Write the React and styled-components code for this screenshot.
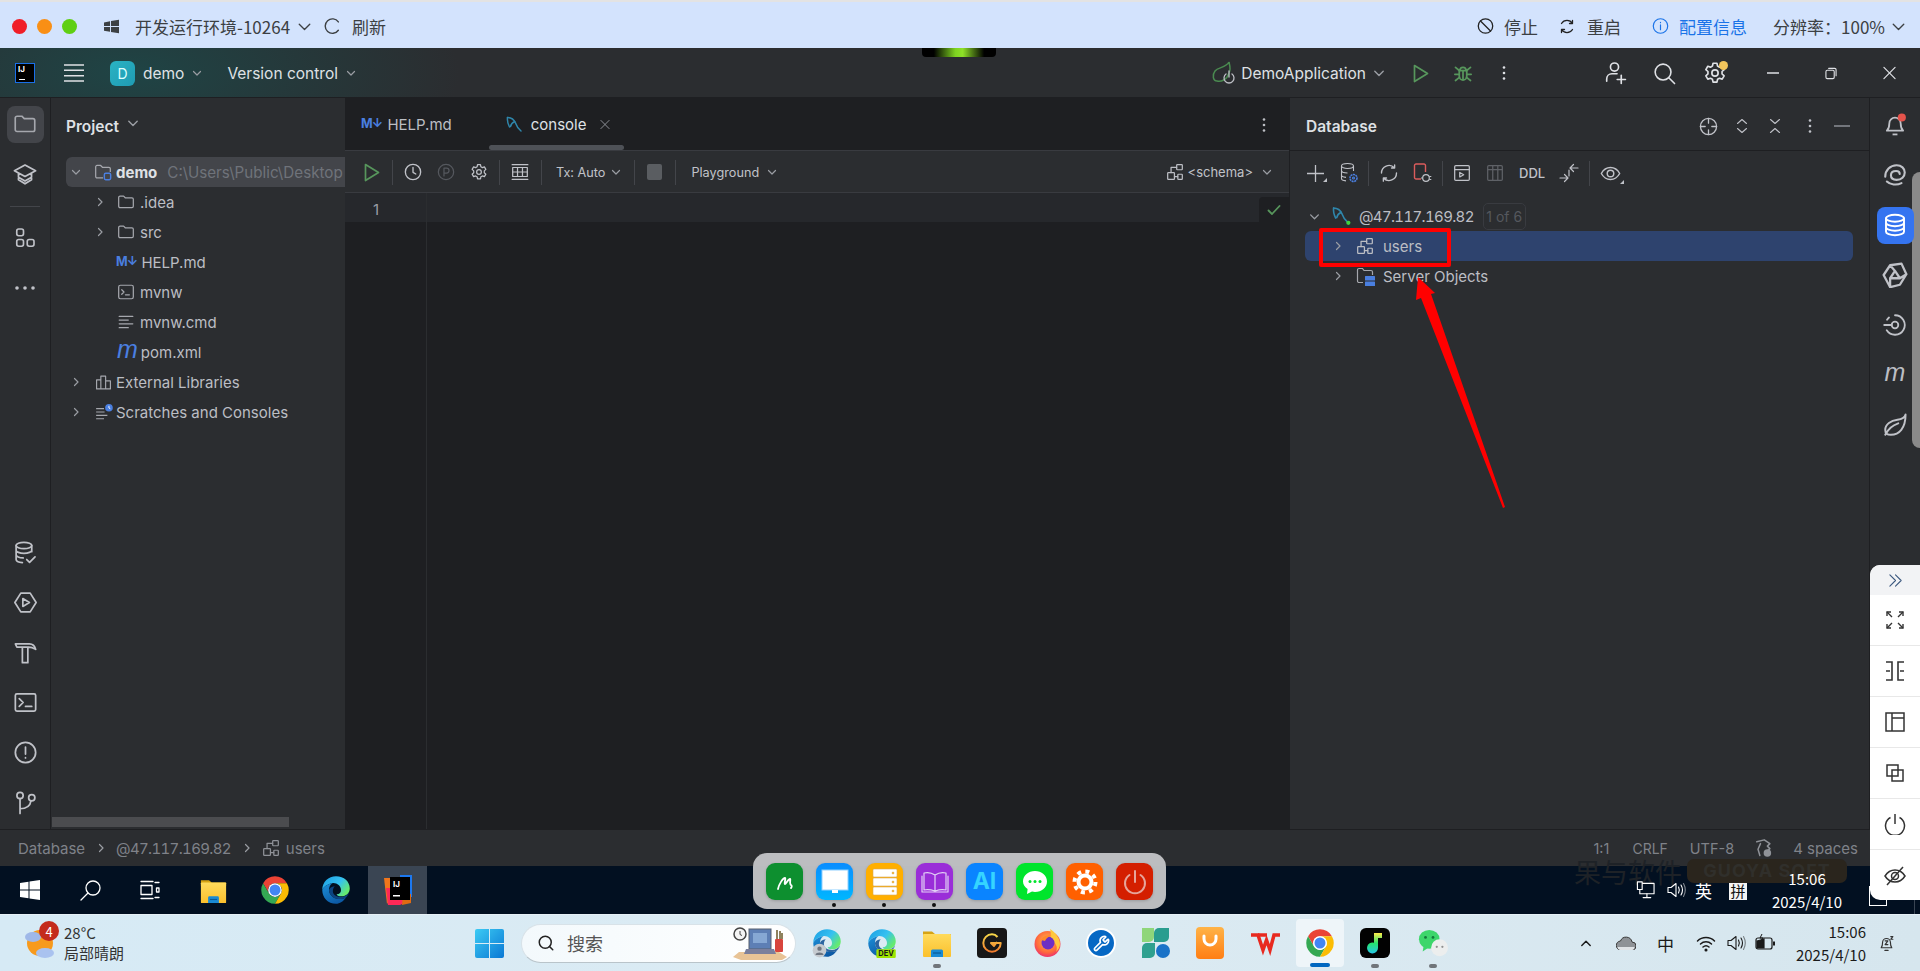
import React from 'react';
import styled, { createGlobalStyle } from 'styled-components';
import { Search, Wrench } from 'lucide-react';

const ui = `Inter, "Noto Sans", sans-serif`;
const cjk = `"Noto Sans CJK SC", "Noto Sans", sans-serif`;

const GlobalStyle = createGlobalStyle`
  html, body { margin: 0; padding: 0; background: #1e1f22; }
  * { box-sizing: border-box; }
`;

const Page = styled.div`
  position: relative;
  width: 1920px;
  height: 971px;
  overflow: hidden;
  display: flex;
  flex-direction: column;
  font-family: ${ui};
  -webkit-font-smoothing: antialiased;
`;

const Slot = styled.span`
  position: relative;
  display: inline-flex;
  align-items: center;
  justify-content: center;
  flex: none;
  width: ${p => p.$w}px;
  margin-left: ${p => p.$ml || 0}px;
  color: ${p => p.$c || 'inherit'};
`;

const Txt = styled.span`
  flex: none;
  white-space: nowrap;
  margin-left: ${p => p.$ml || 0}px;
  font-size: ${p => p.$fs || 15}px;
  font-weight: ${p => p.$fw || 400};
  color: ${p => p.$c || 'inherit'};
`;

const HostTxt = styled(Txt)`
  font-variant-numeric: tabular-nums;
  letter-spacing: -0.65px;
`;

const Push = styled.div`
  margin-left: auto;
`;

/* browser chrome */
const TopBar = styled.header`
  flex: none;
  height: 48px;
  display: flex;
  align-items: center;
  padding: 2px 14px 0 12px;
  background: #d3e3fd;
  border-top: 2px solid #e3e3e3;
  font-family: ${cjk};
  color: #3c4043;
`;

const Light = styled.span`
  flex: none;
  width: 15px;
  height: 15px;
  margin-right: 10px;
  border-radius: 50%;
  background: ${p => p.$c};
`;

const Notch = styled.div`
  position: absolute;
  left: 922px;
  top: 48px;
  width: 74px;
  height: 9px;
  border-radius: 0 0 4px 4px;
  background: linear-gradient(90deg, #000 16%, #7ed321 45%, #8ee028 55%, #000 84%);
`;

/* ide title bar */
const IdeHeader = styled.div`
  flex: none;
  height: 50px;
  display: flex;
  align-items: center;
  padding: 1px 24px 0 15px;
  color: #dfe1e5;
  background: radial-gradient(ellipse 330px 130px at 130px 50%, #1f4445 0%, rgba(31, 68, 69, 0) 100%), #2b2d30;
  border-bottom: 1px solid #1e1f22;
`;

const IjLogo = styled.span`
  flex: none;
  width: 20px;
  height: 20px;
  border: 1.5px solid #1a6fe8;
  background: #000;
  color: #fff;
  font: 700 8px/9px ${ui};
  padding-left: 2px;
  padding-top: 1px;
  position: relative;
  &::after {
    content: '';
    position: absolute;
    left: 3px;
    bottom: 2px;
    width: 6px;
    height: 1.5px;
    background: #fff;
  }
`;

const ProjectBadge = styled.span`
  flex: none;
  width: 25px;
  height: 25px;
  margin-left: 26px;
  border-radius: 6px;
  background: linear-gradient(135deg, #2ab3c4, #1f9bb2);
  color: #dff;
  font-size: 14px;
  display: flex;
  align-items: center;
  justify-content: center;
`;

const NotifDot = styled.span`
  position: absolute;
  right: -1px;
  top: 0;
  width: 9px;
  height: 9px;
  border-radius: 50%;
  background: #f2c55c;
`;

/* panels */
const Main = styled.div`
  flex: none;
  height: 731px;
  display: flex;
  background: #2b2d30;
`;

const LeftStripe = styled.aside`
  flex: none;
  width: 51px;
  display: flex;
  flex-direction: column;
  justify-content: space-between;
  align-items: center;
  padding: 1px 0 2px;
  border-right: 1px solid #1e1f22;
  color: #c0c2c8;
`;

const RightStripe = styled.aside`
  position: relative;
  flex: none;
  width: 51px;
  padding-top: 2px;
  border-left: 1px solid #1e1f22;
  color: #c0c2c8;
`;

const OuterScroll = styled.div`
  position: absolute;
  right: 0;
  top: 74px;
  width: 8px;
  height: 276px;
  border-radius: 8px 0 0 8px;
  background: #8a8a8a;
`;

const StripeGroup = styled.div`
  display: flex;
  flex-direction: column;
  align-items: center;
`;

const StripeSlot = styled.div`
  position: relative;
  width: 100%;
  min-width: 50px;
  height: 50px;
  display: flex;
  align-items: center;
  justify-content: center;
`;

const StripeTile = styled.div`
  width: 37px;
  height: 37px;
  display: flex;
  align-items: center;
  justify-content: center;
  border-radius: 8px;
  background: ${p => (p.$blue ? '#3574f0' : '#43454a')};
  color: ${p => (p.$blue ? '#fff' : '#c9cbd1')};
  z-index: 1;
`;

const StripeSep = styled.div`
  width: 30px;
  height: 14px;
  display: flex;
  align-items: center;
  &::after {
    content: '';
    width: 100%;
    height: 1px;
    background: #43454a;
  }
`;

const ProjectPanel = styled.section`
  position: relative;
  flex: none;
  width: 294px;
  overflow: hidden;
  color: #bcbec4;
`;

const PanelTitle = styled.div`
  height: 59px;
  display: flex;
  align-items: flex-start;
  padding: 19px 0 0 15px;
  line-height: 20px;
`;

const TreeRow = styled.div`
  height: 30px;
  display: flex;
  align-items: center;
  padding-left: ${p => p.$pl || 0}px;
  white-space: nowrap;
  overflow: hidden;
  background: ${p => p.$bg || 'transparent'};
  border-radius: ${p => p.$radius || '6px'};
`;

const ProjectTree = styled.div`
  margin-left: 15px;
`;

const HScroll = styled.div`
  position: absolute;
  left: 1px;
  bottom: 2px;
  width: 237px;
  height: 10px;
  background: #4b4c4f;
`;

const MdMark = styled.span`
  flex: none;
  margin-left: ${p => p.$ml || 0}px;
  font: 700 12.5px/1 ${ui};
  color: #4a7fe0;
  letter-spacing: -0.8px;
`;

const MavenMark = styled.span`
  flex: none;
  margin-left: ${p => p.$ml || 0}px;
  font: italic 500 25px/1 "Liberation Sans", sans-serif;
  color: ${p => p.$c || '#4a7fe0'};
  position: relative;
  top: -3px;
`;

const EditorCol = styled.section`
  flex: 1;
  min-width: 0;
  display: flex;
  flex-direction: column;
  background: #1e1f22;
  color: #bcbec4;
`;

const TabBar = styled.div`
  position: relative;
  flex: none;
  height: 52px;
  display: flex;
  align-items: center;
  padding: 1px 0 0 16px;
`;

const TabLine = styled.div`
  position: absolute;
  left: 144px;
  bottom: 0;
  width: 135px;
  height: 5px;
  border-radius: 3px;
  background: #4e5157;
`;

const EditorTools = styled.div`
  flex: none;
  height: 43px;
  display: flex;
  align-items: center;
  padding: 1px 0 0 19px;
  background: #2b2d30;
  border-top: 1px solid #393b40;
  border-bottom: 1px solid #393b40;
  color: #c0c2c8;
`;

const ToolSep = styled.span`
  flex: none;
  width: 1px;
  height: 25px;
  margin-left: ${p => p.$ml || 0}px;
  background: #43454a;
`;

const StopBox = styled.span`
  flex: none;
  width: 15px;
  height: 16px;
  margin-left: 12px;
  border-radius: 2px;
  background: #5a5d61;
`;

const EditorBody = styled.div`
  flex: 1;
  display: flex;
`;

const Gutter = styled.div`
  flex: none;
  width: 82px;
  border-right: 1px solid #2b2d30;
`;

const CaretRow = styled.div`
  height: 29px;
  display: flex;
  align-items: center;
  background: #26282c;
`;

const LineNo = styled(CaretRow)`
  padding: 3px 0 0 28px;
  font-size: 15px;
  color: #9a9da5;
`;

const CodeArea = styled.div`
  flex: 1;
`;

const CodeCaret = styled(CaretRow)`
  justify-content: flex-end;
  align-items: flex-end;
`;

const InspectBox = styled.div`
  width: 30px;
  height: 25px;
  display: flex;
  align-items: center;
  justify-content: center;
  border-radius: 4px 0 0 0;
  background: #1e1f22;
  color: #57965c;
`;

const DbPanel = styled.section`
  flex: none;
  width: 580px;
  border-left: 1px solid #1e1f22;
  color: #bcbec4;
`;

const DbHead = styled.div`
  height: 53px;
  display: flex;
  align-items: center;
  padding: 4px 19px 0 16px;
  border-bottom: 1px solid #1e1f22;
`;

const DbTools = styled.div`
  height: 50px;
  display: flex;
  align-items: center;
  padding: 0 0 6px 17px;
  color: #c0c2c8;
`;

const DbTree = styled.div`
  margin: 0 16px 0 15px;
`;

const CountBadge = styled.span`
  flex: none;
  width: 43px;
  height: 27px;
  margin-left: 9px;
  display: flex;
  align-items: center;
  justify-content: center;
  border: 1px solid #393b40;
  border-radius: 5px;
  font-size: 14px;
  color: #55585e;
`;

/* bottom bars */
const StatusBar = styled.footer`
  flex: none;
  height: 37px;
  display: flex;
  align-items: center;
  padding: 0 62px 0 18px;
  background: #2b2d30;
  border-top: 1px solid #1e1f22;
  color: #7f8289;
`;

const DarkTaskbar = styled.div`
  position: relative;
  flex: none;
  height: 48px;
  display: flex;
  align-items: center;
  background: #021021;
  color: #fff;
  font-family: ${cjk};
`;

const ActiveApp = styled.div`
  flex: none;
  width: 59px;
  height: 100%;
  margin-left: 17px;
  display: flex;
  align-items: center;
  justify-content: center;
  background: #3a4553;
`;

const Watermark = styled.div`
  position: absolute;
  left: 1574px;
  top: -7px;
  height: 24px;
  display: flex;
  align-items: center;
  gap: 5px;
  font-size: 27px;
  color: #1e2227;
  font-family: ${cjk};
`;

const WatermarkPill = styled.span`
  width: 160px;
  height: 24px;
  border-radius: 7px;
  background: #2a251d;
  color: #302f2b;
  font: 700 18px/24px ${ui};
  text-align: center;
  letter-spacing: 1px;
`;

const ClockOver = styled.div`
  position: relative;
  flex: none;
  margin-left: 23px;
`;

const PinyinBox = styled.span`
  flex: none;
  width: 18px;
  height: 19px;
  margin-left: 17px;
  display: flex;
  align-items: center;
  justify-content: center;
  background: #f4f4f4;
  color: #111;
  font-size: 15px;
`;

const ClockCol = styled.div`
  flex: none;
  display: flex;
  flex-direction: column;
  align-items: ${p => p.$align || 'center'};
  margin-left: ${p => p.$ml || 0}px;
  width: ${p => p.$w}px;
  line-height: 23px;
  font-size: 15px;
  color: ${p => p.$c || 'inherit'};
`;

const ChatStub = styled.span`
  flex: none;
  width: 18px;
  height: 20px;
  margin: 12px 0 0 25px;
  border: 1.5px solid #fff;
`;

const TrayEdge = styled.span`
  flex: none;
  width: 1px;
  height: 100%;
  margin-left: 27px;
  background: #3a4553;
`;

const LightTaskbar = styled.div`
  flex: none;
  height: 57px;
  display: flex;
  align-items: center;
  padding-left: 25px;
  background: linear-gradient(90deg, #d6eaf5, #dcebf3 50%, #d6e6ee);
  border-top: 1px solid #e6f0f6;
  font-family: ${cjk};
  color: #1a1a1a;
`;

const Notify = styled.span`
  position: absolute;
  left: 14px;
  top: -6px;
  width: 20px;
  height: 20px;
  border-radius: 50%;
  background: #c42b1c;
  color: #fff;
  font-size: 13px;
  display: flex;
  align-items: center;
  justify-content: center;
`;

const Weather = styled.div`
  flex: none;
  margin-left: 9px;
  font-size: 15px;
  line-height: 20px;
  color: #333;
`;

const SearchPill = styled.div`
  flex: none;
  width: 275px;
  height: 39px;
  margin-left: 17px;
  padding: 0 6px 0 15px;
  display: flex;
  align-items: center;
  border-radius: 20px;
  border: 1px solid #d8e2e8;
  border-bottom-color: #b9c4ca;
  background: linear-gradient(90deg, #f3f9fc, #ffffff);
  color: #555;
`;

const PinBox = styled.div`
  position: relative;
  flex: none;
  width: ${p => p.$w || 30}px;
  height: ${p => p.$h || 30}px;
  margin-left: ${p => p.$ml || 0}px;
  display: flex;
  align-items: center;
  justify-content: center;
  border-radius: 4px;
  background: ${p => p.$bg || 'transparent'};
`;

const PinMark = styled.span`
  position: absolute;
  left: 50%;
  bottom: ${p => p.$bottom}px;
  width: ${p => p.$w}px;
  height: 4px;
  border-radius: 2px;
  transform: translateX(-50%);
  background: ${p => p.$c};
`;

const ToolDisc = styled.span`
  width: 30px;
  height: 30px;
  display: flex;
  align-items: center;
  justify-content: center;
  border: 2px solid #fff;
  border-radius: 50%;
  background: #0668c4;
  color: #fff;
`;

/* overlays */
const Dock = styled.div`
  position: absolute;
  left: 753px;
  top: 853px;
  width: 413px;
  height: 56px;
  padding: 10px 0 0 13px;
  display: flex;
  gap: 13px;
  border-radius: 14px;
  background: rgba(198, 199, 201, 0.94);
`;

const DockItem = styled.div`
  position: relative;
  width: 37px;
  height: 37px;
  border-radius: 9px;
  background: ${p => p.$bg};
  color: #fff;
  display: flex;
  align-items: center;
  justify-content: center;
  box-shadow: 0 1px 3px rgba(0, 0, 0, 0.18);
  ${p => p.$open && `
    &::after {
      content: '';
      position: absolute;
      left: 16px;
      bottom: -7px;
      width: 4px;
      height: 4px;
      border-radius: 50%;
      background: #111;
    }
  `}
`;

const AiMark = styled.span`
  font: 700 23px/1 ${ui};
  color: #35d4ff;
`;

const FloatPanel = styled.aside`
  position: absolute;
  right: 0;
  top: 565px;
  width: 50px;
  height: 335px;
  background: #fff;
  border-radius: 10px 0 0 10px;
  overflow: hidden;
  color: #333;
`;

const FloatHead = styled.div`
  height: 30px;
  display: flex;
  align-items: center;
  justify-content: center;
  background: #f2f3f5;
  color: #3d5a80;
`;

const FloatRow = styled.div`
  height: 51px;
  display: flex;
  align-items: center;
  justify-content: center;
  border-bottom: 1px solid #e8e8e8;
  &:last-child { border-bottom: 0; }
`;

const RedBox = styled.div`
  position: absolute;
  left: 1319px;
  top: 228px;
  width: 132px;
  height: 39px;
  border: 4px solid #ff0000;
  border-radius: 2px;
`;

const ArrowSvg = styled.svg`
  position: absolute;
  left: 1400px;
  top: 270px;
`;

const Tri = styled.i`
  position: absolute;
  right: -3px;
  bottom: 0;
  width: 0;
  height: 0;
  border-left: 4px solid transparent;
  border-bottom: 4px solid #c0c2c8;
`;

/* icons */
const I = ({ s = 16, vb = 16, sw = 1.1, c = 'currentColor', children }) => (
  <svg width={s} height={s} viewBox={`0 0 ${vb} ${vb}`} fill="none" stroke={c} strokeWidth={sw} strokeLinecap="round" strokeLinejoin="round">
    {children}
  </svg>
);

const Chev = ({ dir = 'down', s = 10, c = '#9a9da3', sw = 1.2 }) => {
  const d = { down: 'M1.5 3.5 5 7l3.5-3.5', right: 'M3.5 1.5 7 5 3.5 8.5', up: 'M1.5 7 5 3.5 8.5 7' }[dir];
  return <I s={s} vb={10} sw={sw} c={c}><path d={d} /></I>;
};

const FolderIco = ({ s = 18 }) => (
  <I s={s} c="#a5a7ad"><path d="M1.5 4a1.2 1.2 0 0 1 1.2-1.2h3.2L7.5 4.4h5.8a1.2 1.2 0 0 1 1.2 1.2v6.2a1.2 1.2 0 0 1-1.2 1.2H2.7a1.2 1.2 0 0 1-1.2-1.2z" /></I>
);

const ModuleFolder = () => (
  <svg width="18" height="18" viewBox="0 0 16 16" fill="none" strokeLinejoin="round">
    <path d="M8 13.2H2.7a1.2 1.2 0 0 1-1.2-1.2V3.4a1.2 1.2 0 0 1 1.2-1.2h3.2l1.6 1.6h5.8a1.2 1.2 0 0 1 1.2 1.2V8" stroke="#a5a7ad" strokeWidth="1.1" />
    <rect x="9.2" y="9.2" width="5.6" height="5.6" rx="1.2" stroke="#4a7fe0" strokeWidth="1.3" />
  </svg>
);

const TerminalFile = () => (
  <I s={18} c="#a5a7ad"><rect x="1.5" y="2" width="13" height="12" rx="1.5" /><path d="M4.2 6 6.2 8 4.2 10M7.5 10.5h3.5" /></I>
);

const TextFile = () => (
  <I s={18} c="#a5a7ad" sw={1.2}><path d="M2 3h12M2 6.3h8M2 9.6h12M2 13h8" /></I>
);

const LibIco = () => (
  <I s={17} c="#a5a7ad"><path d="M1.5 5.5h4v8.5h-4zM5.5 2h4.5v12H5.5zM10 6.5h4.5V14H10z" /></I>
);

const ScratchIco = () => (
  <svg width="18" height="18" viewBox="0 0 16 16" fill="none">
    <path d="M1 5h7M1 8h7.5M1 11h10M1 14h7" stroke="#a5a7ad" strokeWidth="1.1" />
    <circle cx="12.4" cy="4.2" r="3.4" fill="#4a7fe0" />
    <path d="M12.4 2.5v1.9l1.2.7" stroke="#fff" strokeWidth=".8" />
  </svg>
);

const SchemaIco = ({ s = 18, c = '#bcbec4' }) => (
  <I s={s} c={c}><rect x="9.5" y="1.5" width="5" height="4.5" rx=".6" /><rect x="1.5" y="8.5" width="6" height="6" rx=".6" /><rect x="10.5" y="10" width="4" height="4.5" rx=".6" /><path d="M9.5 3.8H4.5v4.7M7.5 12.2h3" /></I>
);

const Dolphin = ({ s = 18, dot }) => (
  <svg width={s} height={s} viewBox="0 0 18 18" fill="none" stroke="#2f86ab" strokeWidth="1.5" strokeLinecap="round">
    <path d="M1.5 1.5C6 1.5 8 3.5 9.5 7c1 3 2.5 5.5 5.5 8" />
    <path d="M1.5 1.5C1 5 2 8 3.5 11" />
    <path d="M8.8 5.5C6.5 6.5 5 8 4.5 10.5" />
    {dot && <circle cx="15.5" cy="15.5" r="2" fill="#3fd43f" stroke="none" />}
  </svg>
);

const Play = ({ c = '#57965c' }) => (
  <svg width="16" height="19" viewBox="0 0 16 19" fill="none" stroke={c} strokeWidth="1.7" strokeLinejoin="round"><path d="M1.5 1.5 14.5 9.5 1.5 17.5z" /></svg>
);

const Bug = () => (
  <I s={20} c="#57965c" sw={1.4}>
    <path d="M5 6h6v4.5a3 3 0 0 1-6 0z" /><path d="M5.6 5.8a2.4 2.4 0 0 1 4.8 0M8 6v7.5M2 3.5l3 2.5M14 3.5 11 6M1.5 9H5M14.5 9H11M2 14l3.2-2.5M14 14l-3.2-2.5" />
  </I>
);

const Dots = ({ s = 16, c = 'currentColor' }) => (
  <svg width={s} height={s} viewBox="0 0 16 16" fill={c}><circle cx="8" cy="2.5" r="1.3" /><circle cx="8" cy="8" r="1.3" /><circle cx="8" cy="13.5" r="1.3" /></svg>
);

const Gear = ({ s = 18, c = 'currentColor', sw = 1.1 }) => (
  <I s={s} c={c} sw={sw}>
    <path d="M6.7 1.5h2.6l.4 1.9 1.3.7 1.8-.6 1.3 2.2-1.4 1.3v1.6l1.4 1.3-1.3 2.2-1.8-.6-1.3.7-.4 1.9H6.7l-.4-1.9-1.3-.7-1.8.6-1.3-2.2 1.4-1.3V7L1.9 5.7l1.3-2.2 1.8.6 1.3-.7z" />
    <circle cx="8" cy="8" r="2.1" />
  </I>
);

const Cap = () => (
  <I s={26}><path d="M8 2.5 14.5 6 8 9.5 1.5 6zM4 7.5v4L8 14l4-2.5v-4M4 10l4 2.3 4-2.3" /></I>
);

const Structure = () => (
  <I s={24}><rect x="2.5" y="2" width="4.5" height="4.5" rx="1.3" /><rect x="2.5" y="9" width="4.5" height="4.5" rx="1.3" /><rect x="9.5" y="9" width="4.5" height="4.5" rx="1.3" /></I>
);

const DbCheck = () => (
  <I s={25}><ellipse cx="7" cy="3.5" rx="5" ry="2" /><path d="M2 3.5v9c0 1 1.5 1.8 4 2M12 3.5v4M2 6.5c0 1.1 2.2 2 5 2s5-.9 5-2M2 9.5c0 1.1 2 2 4.5 2" /><path d="m8.8 12.5 1.8 1.8 3.5-3.5" /></I>
);

const Services = () => (
  <I s={25}><path d="M5 2h6l3.8 6-3.800 6H5L1.200 8z" /><path d="M6.300 5.500 10.500 8l-4.200 2.500z" /></I>
);

const Hammer = () => (
  <I s={25}><path d="M1.500 2.500h9c2 0 3.500 1.500 4 3.500-1.500-1-3-1.500-4.500-1.500H2.500zM6 4.500v10h3.500v-10" /></I>
);

const Terminal = ({ s = 25 }) => (
  <I s={s}><rect x="1.500" y="2.500" width="13" height="11" rx="1" /><path d="M4 5.500 6.500 8 4 10.500M8 10.500h4" /></I>
);

const Warn = () => (
  <I s={25}><circle cx="8" cy="8" r="6.500" /><path d="M8 4.500V9M8 11.300v.2" /></I>
);

const GitIco = () => (
  <I s={25}><circle cx="4.500" cy="3.500" r="2" /><circle cx="12" cy="5" r="2" /><path d="M4.500 5.500V15M4.500 12c3.500 0 6.500-1.500 7-5" /></I>
);

const Bell = () => (
  <svg width="26" height="26" viewBox="0 0 16 16" fill="none" stroke="currentColor" strokeWidth="1.1" strokeLinejoin="round">
    <path d="M3 11.500c1-1 1.500-2 1.500-4.500a3.500 3.500 0 0 1 7 0c0 2.500.5 3.500 1.500 4.500z" />
    <path d="M6.500 13.800h3" />
    <circle cx="12.200" cy="3.400" r="2.500" fill="#e5534b" stroke="none" />
  </svg>
);

const Swirl = () => (
  <I s={26} sw={1.3}><path d="M2 9c0-4 3-7 7-7 3 0 5 2 5 4.500S12 11 9 11c-2 0-3.500-1-3.500-2.800S7 5.500 8.700 5.500c1.300 0 2.200.7 2.200 1.900M3 12c2 2 6 2.500 9 1" /></I>
);

const DbStack = ({ s = 24, c = 'currentColor' }) => (
  <I s={s} c={c} sw={1.3}><ellipse cx="8" cy="3.500" rx="6" ry="2.300" /><path d="M2 3.500v9c0 1.300 2.700 2.300 6 2.300s6-1 6-2.300v-9M2 6.500c0 1.300 2.700 2.300 6 2.300s6-1 6-2.300M2 9.500c0 1.300 2.700 2.300 6 2.300s6-1 6-2.300" /></I>
);

const ClusterIco = () => (
  <I s={26} sw={1.4}><path d="M5 2l7-1 3 6.500-4 6.500-6 1.500L1 8zM8 5.500l3 4.500H5zM5 2l3 3.500M15 7.500 11 10M5 15.500 5 10" /></I>
);

const TargetIco = () => (
  <I s={24} sw={1.2}><path d="M8 1.500A6.500 6.500 0 1 1 2.500 11.500M2.700 4.500A6.500 6.500 0 0 1 4 3" /><circle cx="8" cy="8" r="2.200" /><path d="M.8 8h5" /></I>
);

const LeafIco = () => (
  <I s={26} sw={1.2}><path d="M14.500 1.500c-.5 2-2.500 3-5 3.300C5.500 5.300 2 7.500 2 11c0 2 1.500 3 3.500 3 5 0 9-4 9-12.500zM2 14c2-4 5-6 8-7" /></I>
);

const Crosshair = () => (
  <I s={19}><circle cx="8" cy="8" r="6.800" /><path d="M8 1.200v4M8 10.800v4M1.200 8h4M10.800 8h4" /></I>
);

const ExpandAll = () => <I s={16}><path d="m3.500 5.500 4.500-4 4.500 4M3.500 10.500l4.500 4 4.500-4" /></I>;
const CollapseAll = () => <I s={16}><path d="m3.500 1.500 4.500 4 4.500-4M3.500 14.500l4.500-4 4.500 4" /></I>;

const Win10 = ({ s = 20 }) => (
  <svg width={s} height={s} viewBox="0 0 20 20" fill="#fff"><path d="M0 3 8.500 1.800v7.700H0zM9.500 1.600 20 0v9.500H9.500zM0 10.500h8.500v7.700L0 17zM9.500 10.500H20V20L9.500 18.400z" /></svg>
);

const WinGrid = () => (
  <svg width="15" height="15" viewBox="0 0 20 20" fill="#3c4043"><path d="M0 4.500 8 3v6.300H0zM9.300 2.800 20 1v8.300H9.300zM0 10.700h8v6.300l-8-1.500zM9.300 10.700H20V19L9.300 17.200z" /></svg>
);

const Win11 = () => (
  <svg width="29" height="29" viewBox="0 0 29 29">
    <defs>
      <linearGradient id="w11" x1="0" y1="0" x2="1" y2="1"><stop offset="0" stopColor="#3ccbf4" /><stop offset="1" stopColor="#0a78d4" /></linearGradient>
    </defs>
    <rect width="29" height="29" rx="2" fill="url(#w11)" />
    <path d="M14.500 0v29M0 14.500h29" stroke="#d9ecf5" strokeWidth="1" />
  </svg>
);

const Chrome = ({ s = 30 }) => (
  <svg width={s} height={s} viewBox="0 0 48 48">
    <path d="M4.950 13A22 22 0 0 1 43.050 13H24A11 11 0 0 0 14.470 29.500Z" fill="#ea4335" />
    <path d="M4.950 13 14.470 29.500A11 11 0 0 0 33.530 29.500L24 46A22 22 0 0 1 4.950 13Z" fill="#34a853" />
    <path d="M43.050 13H24A11 11 0 0 1 33.530 29.500L24 46A22 22 0 0 0 43.050 13Z" fill="#fbbc04" />
    <circle cx="24" cy="24" r="11" fill="#fff" />
    <circle cx="24" cy="24" r="8.800" fill="#4285f4" />
  </svg>
);

const Edge = ({ s = 30, id, dev, profile }) => (
  <svg width={s} height={s} viewBox="0 0 48 48">
    <defs>
      <linearGradient id={`${id}a`} x1="0" y1="0" x2="1" y2=".6"><stop offset="0" stopColor="#1b9de2" /><stop offset=".6" stopColor="#35c1f1" /><stop offset="1" stopColor="#66eb6e" /></linearGradient>
      <linearGradient id={`${id}b`} x1="0" y1="0" x2=".6" y2="1"><stop offset="0" stopColor="#1c8fd8" /><stop offset="1" stopColor="#0c59a4" /></linearGradient>
    </defs>
    <path d="M2 24C2 11 12 2 24 2c13 0 22 9 22 19 0 8-6 13-13 13-5 0-8-2-8-3 2 0 7-1 7-7 0-7-7-12-14-11C10 14 4 19 2 24z" fill={`url(#${id}a)`} />
    <path d="M2 24C4 19 10 14 18 13c-4 3-6 8-5 13 2 11 16 16 27 10-4 6-10 10-16 10C11 46 2 36 2 24z" fill={`url(#${id}b)`} />
    <path d="M13 26c2 11 16 16 27 10 2-2 4-5 5-8-3 5-8 7-13 7-8 0-13-4-13-9 0-3 1-6 3-8-5 1-10 3-9 8z" fill="#0d4d92" opacity=".85" />
    {dev && <><rect x="15" y="34" width="31" height="14" rx="2" fill="#9ee500" /><text x="30.500" y="45.500" fontFamily={ui} fontSize="12" fontWeight="700" textAnchor="middle" fill="#1a1a1a">DEV</text></>}
    {profile && <><circle cx="12" cy="36" r="11" fill="#c6cbd0" /><circle cx="12" cy="33" r="3.500" fill="#6f7680" /><path d="M5.500 43c1-5 12-5 13 0z" fill="#6f7680" /></>}
  </svg>
);

const WinFolder = ({ s = 30, id }) => (
  <svg width={s} height={s} viewBox="0 0 30 30">
    <defs><linearGradient id={id} x1="0" y1="0" x2="0" y2="1"><stop offset="0" stopColor="#ffdb5c" /><stop offset="1" stopColor="#fbc02d" /></linearGradient></defs>
    <path d="M1 3.500h9l3 2.500h16v4H1z" fill="#d6a314" />
    <rect x="1" y="6" width="28" height="23" rx="1" fill={`url(#${id})`} />
    <path d="M9 23a1.500 1.500 0 0 1 1.500-1.500h9A1.500 1.500 0 0 1 21 23v6H9z" fill="#1a8ad4" />
    <path d="M11 25h8" stroke="#0b5a96" strokeWidth="1.2" />
  </svg>
);

const IdeaApp = () => (
  <svg width="30" height="32" viewBox="0 0 30 32">
    <path d="M1 4h12v12L4 30z" fill="#f0761c" />
    <path d="M17 1h12v22H17z" fill="#1c78f0" />
    <path d="M3 14h22v13l-8 4H5z" fill="#fe2857" />
    <path d="M20 20h8v9l-9 2z" fill="#e06a12" />
    <rect x="7" y="3" width="20" height="23" fill="#000" />
    <text x="10" y="13" fontFamily={ui} fontSize="8" fontWeight="700" fill="#fff">IJ</text>
    <rect x="10" y="21" width="7" height="1.5" fill="#fff" />
  </svg>
);

const Firefox = () => (
  <svg width="30" height="30" viewBox="0 0 30 30">
    <defs>
      <radialGradient id="ff" cx=".5" cy=".4" r=".7"><stop offset="0" stopColor="#ffbd4f" /><stop offset=".6" stopColor="#ff6a3b" /><stop offset="1" stopColor="#e31587" /></radialGradient>
    </defs>
    <circle cx="14.500" cy="16" r="13" fill="url(#ff)" />
    <path d="M17 1c5 3 10 9 10 15 0 3-2 6-4 8 2-5 0-10-6-12 1-4 1-8 0-11z" fill="#ffc83d" />
    <circle cx="15" cy="15" r="6.500" fill="#6e2fc4" />
    <path d="M8 12c2-4 7-6 11-4-3 0-6 2-7 5z" fill="#ff8a2b" />
  </svg>
);

const GApp = () => (
  <svg width="30" height="30" viewBox="0 0 30 30" fill="none">
    <defs><linearGradient id="gg" x1="0" y1="0" x2="0" y2="1"><stop offset="0" stopColor="#f6d84a" /><stop offset="1" stopColor="#f07a2c" /></linearGradient></defs>
    <rect width="30" height="30" rx="4" fill="#171717" />
    <path d="M20.500 9c-1.500-1.800-3.500-2.700-5.500-2.700A8.700 8.700 0 1 0 23.700 15H14l3 3 3-4" stroke="url(#gg)" strokeWidth="2" strokeLinejoin="round" />
  </svg>
);

const PetalApp = () => (
  <svg width="30" height="32" viewBox="0 0 30 32">
    <path d="M1 1h12v9a5 5 0 0 1-5 5H1z" fill="#8fd67a" />
    <path d="M28 1H18a5 5 0 0 0-5 5v9h10a5 5 0 0 0 5-5z" fill="#2a9d8f" />
    <path d="M1 31h8a5 5 0 0 0 5-5V16H6a5 5 0 0 0-5 5z" fill="#2fa08f" />
    <circle cx="22" cy="24" r="7" fill="#1a73c8" />
  </svg>
);

const UApp = () => (
  <svg width="28" height="32" viewBox="0 0 28 32" fill="none">
    <defs><linearGradient id="ua" x1="0" y1="0" x2="0" y2="1"><stop offset="0" stopColor="#ffb347" /><stop offset="1" stopColor="#ff7e14" /></linearGradient></defs>
    <rect width="28" height="32" rx="4" fill="url(#ua)" />
    <path d="M8 9v3a6 6 0 0 0 12 0V9" stroke="#fff" strokeWidth="3" strokeLinecap="round" />
  </svg>
);

const WpsApp = () => (
  <svg width="30" height="28" viewBox="0 0 30 28" fill="none" stroke="#e8291f" strokeWidth="3.5" strokeLinejoin="miter">
    <path d="M1 6h7l5 15 3.500-10L20 21 24 6h6" />
    <path d="M8 6h9" />
  </svg>
);

const MusicApp = () => (
  <svg width="30" height="30" viewBox="0 0 30 30">
    <defs><linearGradient id="mu" x1="0" y1="0" x2="0" y2="1"><stop offset="0" stopColor="#ffe94a" /><stop offset=".5" stopColor="#25e36c" /><stop offset="1" stopColor="#27c7e8" /></linearGradient></defs>
    <rect width="30" height="30" rx="6" fill="#020202" />
    <path d="M14 5h8v5h-4v10a5.500 5.500 0 1 1-4-5.300z" fill="url(#mu)" />
  </svg>
);

const WeChat = () => (
  <svg width="32" height="30" viewBox="0 0 32 30">
    <ellipse cx="12" cy="11" rx="11" ry="10" fill="#3dd66b" />
    <path d="M6 18 5 24l6-4z" fill="#3dd66b" />
    <circle cx="8" cy="9" r="1.500" fill="#13793b" />
    <circle cx="16" cy="9" r="1.500" fill="#13793b" />
    <circle cx="23" cy="20" r="9" fill="#eceeee" />
    <circle cx="20" cy="19" r="1.200" fill="#8f8f8f" />
    <circle cx="26" cy="19" r="1.200" fill="#8f8f8f" />
  </svg>
);

const WeatherIco = () => (
  <svg width="30" height="32" viewBox="0 0 30 32">
    <circle cx="15" cy="16" r="13" fill="#f79a1c" />
    <ellipse cx="8" cy="10" rx="8" ry="5" fill="#9fb8e8" />
    <ellipse cx="20" cy="26" rx="9" ry="5" fill="#a9c2ef" />
  </svg>
);

const DeskArt = () => (
  <svg width="58" height="36" viewBox="0 0 58 36" fill="none">
    <path d="M8 27h40l8 5-5 3H10l-8-3z" fill="#e8c396" />
    <circle cx="9" cy="9" r="6" fill="#f4f4f4" stroke="#444" strokeWidth="1.5" />
    <path d="M9 6v3.500l2 1" stroke="#444" />
    <rect x="18" y="4" width="22" height="20" fill="#5d7fb5" stroke="#58616f" />
    <rect x="22" y="8" width="14" height="10" fill="#86a8d4" />
    <path d="M15 24h28l2 5H13z" fill="#7b7f9c" />
    <rect x="44" y="14" width="8" height="13" rx="1" fill="#d8453d" />
    <path d="M46 14V5M49 14V6M51 14V8" stroke="#6b5a2a" strokeWidth="1.5" />
  </svg>
);

const Wifi = () => (
  <I s={20} vb={20} c="#1a1a1a" sw={1.5}><path d="M1.500 8a12 12 0 0 1 17 0M4.500 11a8 8 0 0 1 11 0M7 14a4.500 4.500 0 0 1 6 0" /><circle cx="10" cy="17" r=".8" fill="#1a1a1a" /></I>
);

const Speaker = ({ c = '#1a1a1a' }) => (
  <I s={20} vb={20} c={c} sw={1.1}><path d="M2 7.500h3L10 3.500v13l-5-4H2zM12.500 7c1 1.800 1 4.200 0 6M15 5c1.800 3 1.800 7 0 10" /><path d="M17.500 3.500c2.200 4 2.200 9 0 13" opacity=".5" /></I>
);

const Battery = () => (
  <svg width="21" height="20" viewBox="0 0 21 20" fill="none" stroke="#1a1a1a" strokeWidth="1.2">
    <rect x="1" y="5" width="16" height="11" rx="2" />
    <path d="M2 8 9 6v9H2z" fill="#1a1a1a" />
    <path d="M19 8.500v4" strokeWidth="2" />
    <path d="m7 1-2 4h3L6 8" strokeWidth="1" />
  </svg>
);

const CloudIco = () => (
  <svg width="20" height="14" viewBox="0 0 20 14">
    <path d="M5 14a4.500 4.500 0 0 1-.5-9A6 6 0 0 1 16 6a4 4 0 0 1 0 8z" fill="#8e9296" stroke="#3a3a3a" strokeWidth="1" />
    <path d="M1.500 11h17v.8a2.200 2.200 0 0 1-2 2.200H4a3 3 0 0 1-2.500-3z" fill="#dfe3e6" />
  </svg>
);

const AppBell = () => (
  <I s={17} c="#333" sw={1.1}><path d="M3 12c.8-1 1.300-2 1.300-5a3.700 3.700 0 0 1 7.400 0c0 3 .5 4 1.300 5zM6.500 14.500h3" /><path d="M6.700 5.500h2.600L6.700 9h2.600M12 1.500h2L12 4h2" /></I>
);

const Monitor = () => (
  <I s={20} vb={20} c="#fff" sw={1.2}><rect x="4" y="3" width="15" height="11" /><path d="M11.500 14v4M7.500 18h8" /><rect x="1.500" y="1.500" width="5" height="8" fill="#021021" /></I>
);

const FLOAT = [
  <svg key="full" width="20" height="20" viewBox="0 0 20 20" fill="none" stroke="#333" strokeWidth="1.4"><path d="M2 2l5 5M18 2l-5 5M2 18l5-5M18 18l-5-5" /><path d="M2 6V2h4M14 2h4v4M2 14v4h4M18 14v4h-4" /></svg>,
  <svg key="split" width="20" height="20" viewBox="0 0 20 20" fill="none" stroke="#333" strokeWidth="1.6"><path d="M1 1h6v18H1M19 1h-6v18h6" /><path d="M1 10h4M19 10h-4" /></svg>,
  <svg key="layout" width="20" height="20" viewBox="0 0 20 20" fill="none" stroke="#333" strokeWidth="1.5"><rect x="1" y="1" width="18" height="18" /><path d="M7 1v18M7 6h12" /></svg>,
  <svg key="overlap" width="18" height="18" viewBox="0 0 18 18" fill="none" stroke="#333" strokeWidth="1.5"><rect x="1" y="1" width="11" height="11" /><rect x="6" y="6" width="11" height="11" /></svg>,
  <svg key="power" width="22" height="22" viewBox="0 0 22 22" fill="none" stroke="#333" strokeWidth="1.5"><path d="M11 1v10" /><path d="M6.500 4.500a9.500 9.500 0 1 0 9 0" /></svg>,
  <svg key="hide" width="22" height="22" viewBox="0 0 22 22" fill="none" stroke="#333" strokeWidth="1.5"><path d="M1 11c2.500-4 6-6 10-6s7.500 2 10 6c-2.500 4-6 6-10 6s-7.500-2-10-6z" /><circle cx="11" cy="11" r="3.500" /><path d="M3 20 19 2" /></svg>,
];

const DockSign = () => (
  <I s={24} vb={24} c="#fff" sw={1.8}><path d="M5 19c1-5 5-11 7-11 1 0-1 6 0 6s3-5 5-5c1 0-1 5 1 6 1 .5 1 2 0 3" /></I>
);

const DockMonitor = () => (
  <svg width="28" height="28" viewBox="0 0 28 28"><rect x="1" y="2" width="26" height="20" fill="#fff" stroke="#8fd0ff" /><path d="M11 22h6v3h-6z" fill="#fff" /></svg>
);

const DockServer = () => (
  <svg width="26" height="28" viewBox="0 0 26 28" fill="#fff" stroke="#d8a858" strokeWidth=".6"><rect x="1" y="1" width="24" height="8" rx="1" /><rect x="1" y="10" width="24" height="8" rx="1" /><rect x="1" y="19" width="24" height="8" rx="1" /><circle cx="21" cy="5" r="1" fill="#ffaf00" /><circle cx="21" cy="14" r="1" fill="#ffaf00" /><circle cx="21" cy="23" r="1" fill="#ffaf00" /></svg>
);

const DockBook = () => (
  <I s={30} vb={30} c="#e3d2f5" sw={1.2}><path d="M15 8c-3-2-7-3-11-2v17c4-1 8 0 11 1 3-1 7-2 11-1V6c-4-1-8 0-11 2zM15 8v16M2 9v16h26V9" /></I>
);

const DockChat = () => (
  <svg width="28" height="28" viewBox="0 0 28 28"><path d="M14 3c6.600 0 12 4.500 12 10.500S20.600 24 14 24c-1 0-2-.1-3-.4L6 26l.6-5C4 19 2 16.500 2 13.500 2 7.500 7.400 3 14 3z" fill="#fff" /><circle cx="9" cy="13.500" r="1.500" fill="#00e52c" /><circle cx="14" cy="13.500" r="1.500" fill="#00e52c" /><circle cx="19" cy="13.500" r="1.500" fill="#00e52c" /></svg>
);

const DockGear = () => (
  <svg width="26" height="26" viewBox="0 0 26 26" fill="none" stroke="#fff"><circle cx="13" cy="13" r="6.500" strokeWidth="4" /><circle cx="13" cy="13" r="10.500" strokeWidth="4" strokeDasharray="4 4.250" /></svg>
);

const DockPower = () => (
  <I s={26} vb={26} c="#e6a59b" sw={2}><path d="M13 2v11" /><path d="M7.500 6a10 10 0 1 0 11 0" /></I>
);

const Plug = () => (
  <svg width="19" height="20" viewBox="0 0 19 20" fill="none">
    <path d="M8 16H3a1.500 1.500 0 0 1-1.500-1.500v-12A1.500 1.500 0 0 1 3 1h8a1.500 1.500 0 0 1 1.500 1.500V9" stroke="#db5c5c" strokeWidth="1.4" />
    <circle cx="13" cy="15" r="3.300" stroke="#c0c2c8" strokeWidth="1.2" />
    <path d="M9.700 15H8M16.300 13.500h2M16.300 16.500h2" stroke="#c0c2c8" strokeWidth="1.2" />
  </svg>
);

const DbGear = () => (
  <svg width="19" height="22" viewBox="0 0 19 22" fill="none" stroke="#c0c2c8" strokeWidth="1.1">
    <ellipse cx="7.500" cy="4" rx="6" ry="2.500" />
    <path d="M1.500 4v12.500c0 1.200 2 2.200 4.500 2.400M13.500 4v5M1.500 8.500c0 1.300 2.700 2.500 6 2.500M1.500 13c0 1.200 1.800 2.200 4.500 2.400" />
    <circle cx="13.500" cy="16" r="3.500" stroke="#4a7fe0" strokeWidth="1.6" strokeDasharray="2 .6" />
    <circle cx="13.500" cy="16" r="1" stroke="#4a7fe0" />
  </svg>
);

const ServerFolder = () => (
  <svg width="19" height="19" viewBox="0 0 19 19" fill="none">
    <path d="M7 15.500H3A1.500 1.500 0 0 1 1.500 14V3A1.500 1.500 0 0 1 3 1.500h3.500L8 3.500h7A1.500 1.500 0 0 1 16.500 5v3" stroke="#a5a7ad" strokeWidth="1.2" />
    <rect x="9" y="9" width="10" height="4.500" rx=".5" fill="#4a7fe0" />
    <rect x="9" y="14.500" width="10" height="4.500" rx=".5" fill="#4a7fe0" />
  </svg>
);

function App() {
  return (
    <Page>
      <GlobalStyle />

      <TopBar>
        <Light $c="#f01e28" />
        <Light $c="#f98f15" />
        <Light $c="#5fcf13" />
        <Slot $w={15} $ml={17}><WinGrid /></Slot>
        <Txt $ml={16} $fs={17}>开发运行环境-10264</Txt>
        <Slot $w={15} $ml={7}><Chev s={15} c="#3c4043" sw={.9} /></Slot>
        <Slot $w={17} $ml={12}>
          <I s={18} c="#3c4043" sw={1.3}><path d="M13.500 4.200A6.800 6.800 0 1 0 13.500 12" /></I>
        </Slot>
        <Txt $ml={11} $fs={17}>刷新</Txt>
        <Push />
        <Slot $w={17}><I s={18} c="#222" sw={1.2}><circle cx="8" cy="8" r="6.800" /><path d="m3.300 3.300 9.400 9.400" /></I></Slot>
        <Txt $ml={10} $fs={17}>停止</Txt>
        <Slot $w={16} $ml={21}><I s={17} c="#222" sw={1.3}><path d="M13.500 5A6.500 6.500 0 0 0 2.500 5M2.500 11a6.500 6.500 0 0 0 11 0M13.500 2v3h-3M2.500 14v-3h3" /></I></Slot>
        <Txt $ml={12} $fs={17}>重启</Txt>
        <Slot $w={17} $ml={31}><I s={18} c="#1a73e8" sw={1.1}><circle cx="8" cy="8" r="6.800" /><path d="M8 7v4.500M8 4.500v.4" /></I></Slot>
        <Txt $ml={10} $fs={17} $c="#1a73e8">配置信息</Txt>
        <Txt $ml={26} $fs={17}>分辨率：100%</Txt>
        <Slot $w={15} $ml={6}><Chev s={15} c="#3c4043" sw={.9} /></Slot>
      </TopBar>

      <IdeHeader>
        <IjLogo>IJ</IjLogo>
        <Slot $w={20} $ml={29}>
          <I s={20} vb={20} sw={1.5}><path d="M0 2h20M0 7.300h20M0 12.700h20M0 18h20" /></I>
        </Slot>
        <ProjectBadge>D</ProjectBadge>
        <Txt $ml={8} $fs={15.5}>demo</Txt>
        <Slot $w={10} $ml={8}><Chev /></Slot>
        <Txt $ml={25} $fs={15.5}>Version control</Txt>
        <Slot $w={10} $ml={8}><Chev /></Slot>
        <Push />
        <Slot $w={25}>
          <svg width="25" height="24" viewBox="0 0 25 24" fill="none">
            <path d="M18 1c1 4 2 8 0 11M18 12c-2 7-8 9-12 8-4 0-5-6-2-10 3-4 11-3 14-9" stroke="#4a8a50" strokeWidth="1.5" />
            <path d="M21 13a5 5 0 1 1-6 0M18 10v6" stroke="#bcbec4" strokeWidth="1.3" strokeLinecap="round" />
          </svg>
        </Slot>
        <Txt $ml={5} $fs={15.5}>DemoApplication</Txt>
        <Slot $w={12} $ml={7}><Chev s={12} /></Slot>
        <Slot $w={16} $ml={28}><Play /></Slot>
        <Slot $w={20} $ml={24}><Bug /></Slot>
        <Slot $w={16} $ml={23}><Dots s={20} /></Slot>
        <Slot $w={24} $ml={92}>
          <I s={24} sw={1.1}><circle cx="7" cy="4" r="2.700" /><path d="M1.800 13.500V12c0-2 1.500-3.500 3.500-3.500h3.400M11.500 9.500V15M8.800 12.300h5.500" /></I>
        </Slot>
        <Slot $w={23} $ml={25}><I s={23} sw={1.1}><circle cx="7" cy="7" r="5.500" /><path d="m11 11 4 4" /></I></Slot>
        <Slot $w={24} $ml={27}>
          <Gear s={24} />
          <NotifDot />
        </Slot>
        <Slot $w={12} $ml={40}><I s={12} vb={12} sw={1.3}><path d="M0 6h12" /></I></Slot>
        <Slot $w={12} $ml={46}><I s={13} vb={13} sw={1.2}><rect x="1" y="3" width="9" height="9" rx="1.500" /><path d="M4 1h6.500A1.500 1.500 0 0 1 12 2.500V9" /></I></Slot>
        <Slot $w={13} $ml={46}><I s={14} vb={14} sw={1.3}><path d="m1 1 12 12M13 1 1 13" /></I></Slot>
      </IdeHeader>

      <Main>
        <LeftStripe>
          <StripeGroup>
            <StripeSlot><StripeTile><Slot $w={24}><FolderIco s={26} /></Slot></StripeTile></StripeSlot>
            <StripeSlot><Cap /></StripeSlot>
            <StripeSep />
            <StripeSlot><Structure /></StripeSlot>
            <StripeSlot>
              <svg width="20" height="4" viewBox="0 0 20 4" fill="currentColor"><circle cx="2" cy="2" r="1.800" /><circle cx="10" cy="2" r="1.800" /><circle cx="18" cy="2" r="1.800" /></svg>
            </StripeSlot>
          </StripeGroup>
          <StripeGroup>
            <StripeSlot><DbCheck /></StripeSlot>
            <StripeSlot><Services /></StripeSlot>
            <StripeSlot><Hammer /></StripeSlot>
            <StripeSlot><Terminal /></StripeSlot>
            <StripeSlot><Warn /></StripeSlot>
            <StripeSlot><GitIco /></StripeSlot>
          </StripeGroup>
        </LeftStripe>

        <ProjectPanel>
          <PanelTitle>
            <Txt $fw={600} $fs={15.5} $c="#dfe1e5">Project</Txt>
            <Slot $w={12} $ml={8}><Chev s={12} /></Slot>
          </PanelTitle>
          <ProjectTree>
            <TreeRow $pl={5} $bg="#43454a" $radius="6px 0 0 6px">
              <Slot $w={10}><Chev /></Slot>
              <Slot $w={18} $ml={13}><ModuleFolder /></Slot>
              <Txt $ml={4} $fw={700} $c="#dfe1e5">demo</Txt>
              <Txt $ml={10} $fs={15.2} $c="#6f737a">C:\Users\Public\Desktop</Txt>
            </TreeRow>
            <TreeRow $pl={29}>
              <Slot $w={10}><Chev dir="right" /></Slot>
              <Slot $w={18} $ml={12}><FolderIco /></Slot>
              <Txt $ml={5}>.idea</Txt>
            </TreeRow>
            <TreeRow $pl={29}>
              <Slot $w={10}><Chev dir="right" /></Slot>
              <Slot $w={18} $ml={12}><FolderIco /></Slot>
              <Txt $ml={5}>src</Txt>
            </TreeRow>
            <TreeRow $pl={50}>
              <MdMark>M↓</MdMark>
              <Txt $ml={4}>HELP.md</Txt>
            </TreeRow>
            <TreeRow $pl={51}>
              <Slot $w={18}><TerminalFile /></Slot>
              <Txt $ml={5}>mvnw</Txt>
            </TreeRow>
            <TreeRow $pl={51}>
              <Slot $w={18}><TextFile /></Slot>
              <Txt $ml={5}>mvnw.cmd</Txt>
            </TreeRow>
            <TreeRow $pl={51}>
              <MavenMark>m</MavenMark>
              <Txt $ml={3}>pom.xml</Txt>
            </TreeRow>
            <TreeRow $pl={5}>
              <Slot $w={10}><Chev dir="right" /></Slot>
              <Slot $w={17} $ml={14}><LibIco /></Slot>
              <Txt $ml={4}>External Libraries</Txt>
            </TreeRow>
            <TreeRow $pl={5}>
              <Slot $w={10}><Chev dir="right" /></Slot>
              <Slot $w={18} $ml={14}><ScratchIco /></Slot>
              <Txt $ml={3}>Scratches and Consoles</Txt>
            </TreeRow>
          </ProjectTree>
          <HScroll />
        </ProjectPanel>

        <EditorCol>
          <TabBar>
            <MdMark>M↓</MdMark>
            <Txt $ml={5}>HELP.md</Txt>
            <Slot $w={18} $ml={54}><Dolphin /></Slot>
            <Txt $ml={7} $c="#dfe1e5">console</Txt>
            <Slot $w={10} $ml={14}><I s={11} vb={11} c="#8b8e95" sw={1.1}><path d="m1 1 9 9M10 1l-9 9" /></I></Slot>
            <Push />
            <Slot $w={16}><Dots s={18} /></Slot>
            <Slot $w={17} />
            <TabLine />
          </TabBar>
          <EditorTools>
            <Slot $w={16}><Play /></Slot>
            <ToolSep $ml={12} />
            <Slot $w={18} $ml={11}><I s={18} sw={1.2}><circle cx="8" cy="8" r="6.800" /><path d="M8 4v4.300l2.500 1.500" /></I></Slot>
            <Slot $w={18} $ml={15}><I s={18} c="#55585e" sw={1.1}><circle cx="8" cy="8" r="6.800" /><path d="M6.200 11.500v-7h2.300a2.200 2.200 0 0 1 0 4.400H6.200" /></I></Slot>
            <Slot $w={18} $ml={15}><Gear s={18} /></Slot>
            <ToolSep $ml={11} />
            <Slot $w={18} $ml={11}><I s={18} sw={1.1}><path d="M1 1.500h14M1 14.500h14" /><rect x="1.500" y="4" width="13" height="8" /><path d="M1.500 8h13M5.800 4v8M10.200 4v8" /></I></Slot>
            <ToolSep $ml={12} />
            <Txt $ml={14} $fs={12.7}>Tx: Auto</Txt>
            <Slot $w={10} $ml={6}><Chev /></Slot>
            <ToolSep $ml={13} />
            <StopBox />
            <ToolSep $ml={13} />
            <Txt $ml={15} $fs={12.7}>Playground</Txt>
            <Slot $w={10} $ml={8}><Chev /></Slot>
            <Push />
            <Slot $w={18}><SchemaIco /></Slot>
            <Txt $ml={4} $fs={13}>&lt;schema&gt;</Txt>
            <Slot $w={10} $ml={9}><Chev /></Slot>
            <Slot $w={17} />
          </EditorTools>
          <EditorBody>
            <Gutter><LineNo>1</LineNo></Gutter>
            <CodeArea>
              <CodeCaret>
                <InspectBox><I s={16} sw={1.8}><path d="m2.500 8.500 3.500 3.500 7.500-8" /></I></InspectBox>
              </CodeCaret>
            </CodeArea>
          </EditorBody>
        </EditorCol>

        <DbPanel>
          <DbHead>
            <Txt $fw={600} $fs={15.5} $c="#dfe1e5">Database</Txt>
            <Push />
            <Slot $w={19} $c="#c0c2c8"><Crosshair /></Slot>
            <Slot $w={16} $ml={16} $c="#c0c2c8"><ExpandAll /></Slot>
            <Slot $w={16} $ml={17} $c="#c0c2c8"><CollapseAll /></Slot>
            <Slot $w={16} $ml={19} $c="#c0c2c8"><Dots s={18} /></Slot>
            <Slot $w={16} $ml={16} $c="#8c8f96"><I s={16} sw={1.3}><path d="M0 8h16" /></I></Slot>
          </DbHead>
          <DbTools>
            <Slot $w={17}>
              <I s={17} sw={1.2}><path d="M8 0v16M0 8h16" /></I>
              <Tri />
            </Slot>
            <Slot $w={19} $ml={16}><DbGear /></Slot>
            <ToolSep $ml={9} />
            <Slot $w={20} $ml={10}>
              <I s={20} sw={1.1}><path d="M2 8a6 6 0 0 1 10.300-4.200M14 8a6 6 0 0 1-10.300 4.200M12.500 1.500V4H10M3.500 14.500V12H6" /></I>
            </Slot>
            <Slot $w={19} $ml={14}><Plug /></Slot>
            <ToolSep $ml={10} />
            <Slot $w={18} $ml={10}><I s={18} sw={1.1}><rect x="1.500" y="1.500" width="13" height="13" rx="1" /><path d="M1.500 5h13M6 7.500 9.500 9.500 6 11.500z" /></I></Slot>
            <Slot $w={18} $ml={15}><I s={18} c="#5f6267" sw={1.1}><rect x="1.500" y="1.500" width="13" height="13" rx="1" /><path d="M1.500 5h13M6 1.500v13M10.500 1.500v13" /></I></Slot>
            <Txt $ml={15} $fs={13} $fw={500}>DDL</Txt>
            <Slot $w={20} $ml={14}><I s={20} vb={20} sw={1.2}><path d="M19 5h-8M14.500 1.500 11 5l3.500 3.500M1 15h8M5.500 11.500 9 15l-3.500 3.500M10 7v6" /></I></Slot>
            <ToolSep $ml={10} />
            <Slot $w={21} $ml={10}>
              <I s={21} sw={1.1}><path d="M1 8c1.700-3 4-4.500 7-4.500S13.300 5 15 8c-1.700 3-4 4.500-7 4.500S2.700 11 1 8z" /><circle cx="8" cy="8" r="2.500" /></I>
              <Tri />
            </Slot>
          </DbTools>
          <DbTree>
            <TreeRow $pl={4}>
              <Slot $w={11}><Chev s={11} /></Slot>
              <Slot $w={19} $ml={12}><Dolphin s={20} dot /></Slot>
              <HostTxt $ml={8}>@47.117.169.82</HostTxt>
              <CountBadge>1 of 6</CountBadge>
            </TreeRow>
            <TreeRow $pl={28} $bg="#2e436e">
              <Slot $w={10}><Chev dir="right" /></Slot>
              <Slot $w={18} $ml={13}><SchemaIco /></Slot>
              <Txt $ml={9}>users</Txt>
            </TreeRow>
            <TreeRow $pl={28}>
              <Slot $w={10}><Chev dir="right" /></Slot>
              <Slot $w={19} $ml={13}><ServerFolder /></Slot>
              <Txt $ml={8}>Server Objects</Txt>
            </TreeRow>
          </DbTree>
        </DbPanel>

        <RightStripe>
          <OuterScroll />
          <StripeSlot><Bell /></StripeSlot>
          <StripeSlot><Swirl /></StripeSlot>
          <StripeSlot><StripeTile $blue><DbStack /></StripeTile></StripeSlot>
          <StripeSlot><ClusterIco /></StripeSlot>
          <StripeSlot><TargetIco /></StripeSlot>
          <StripeSlot><MavenMark $c="#bcbec4">m</MavenMark></StripeSlot>
          <StripeSlot><LeafIco /></StripeSlot>
        </RightStripe>
      </Main>

      <StatusBar>
        <Txt>Database</Txt>
        <Slot $w={10} $ml={11}><Chev dir="right" /></Slot>
        <HostTxt $ml={10}>@47.117.169.82</HostTxt>
        <Slot $w={10} $ml={11}><Chev dir="right" /></Slot>
        <Slot $w={18} $ml={10}><SchemaIco c="#8f9298" /></Slot>
        <Txt $ml={6}>users</Txt>
        <Push />
        <Txt $fs={14.5}>1:1</Txt>
        <Txt $ml={23} $fs={14}>CRLF</Txt>
        <Txt $ml={22} $fs={14.5}>UTF-8</Txt>
        <Slot $w={20} $ml={19}><I s={20} c="#8f9298" sw={1.2}><path d="M3 3l6-1.500 4.500 3-2 2 2 2-2 2M6 4.500 4 9l1.500 5" /><circle cx="11.500" cy="12" r="3" fill="#8f9298" stroke="none" /></I></Slot>
        <Txt $ml={20}>4 spaces</Txt>
      </StatusBar>

      <DarkTaskbar>
        <Watermark>果与软件<WatermarkPill>GUOYA SOFT</WatermarkPill></Watermark>
        <Slot $w={20} $ml={20}><Win10 /></Slot>
        <Slot $w={21} $ml={40}>
          <I s={21} vb={21} c="#fff" sw={1.3}><circle cx="13" cy="8" r="7" /><path d="m8 13-7 7" /></I>
        </Slot>
        <Slot $w={20} $ml={39}>
          <I s={20} vb={20} c="#fff" sw={1.3}><rect x="1" y="5.500" width="11" height="9" /><path d="M1 1.500h12M1 18.500h12M15 2.500h4M16.500 8H19v4h-2.500zM15 17.500h4" /></I>
        </Slot>
        <Slot $w={27} $ml={40}><WinFolder s={27} id="wf1" /></Slot>
        <Slot $w={30} $ml={33}><Chrome /></Slot>
        <Slot $w={30} $ml={31}><Edge id="e1" /></Slot>
        <ActiveApp><IdeaApp /></ActiveApp>
        <Slot $w={19} $ml={1209}><Monitor /></Slot>
        <Slot $w={20} $ml={11}><Speaker c="#fff" /></Slot>
        <Txt $ml={9} $fs={17}>英</Txt>
        <PinyinBox>拼</PinyinBox>
        <ClockOver>
          <ClockCol $w={74}>
            <span>15:06</span>
            <span>2025/4/10</span>
          </ClockCol>
        </ClockOver>
        <ChatStub />
        <TrayEdge />
      </DarkTaskbar>

      <LightTaskbar>
        <Slot $w={30}>
          <WeatherIco />
          <Notify>4</Notify>
        </Slot>
        <Weather>
          <div>28°C</div>
          <div>局部晴朗</div>
        </Weather>
        <Slot $w={29} $ml={351}><Win11 /></Slot>
        <SearchPill>
          <Search size={18} color="#222" strokeWidth={2} />
          <Txt $ml={12} $fs={18} $c="#555">搜索</Txt>
          <Push />
          <DeskArt />
        </SearchPill>
        <PinBox $ml={16}><Edge id="e2" profile /></PinBox>
        <PinBox $ml={25}><Edge id="e3" dev /></PinBox>
        <PinBox $ml={25}>
          <WinFolder id="wf2" />
          <PinMark $bottom={-10} $w={8} $c="#70757a" />
        </PinBox>
        <PinBox $ml={25}><GApp /></PinBox>
        <PinBox $ml={26}><Firefox /></PinBox>
        <PinBox $ml={23}><ToolDisc><Wrench size={17} strokeWidth={2.4} /></ToolDisc></PinBox>
        <PinBox $ml={25}><PetalApp /></PinBox>
        <PinBox $ml={25} $w={28}><UApp /></PinBox>
        <PinBox $ml={26}><WpsApp /></PinBox>
        <PinBox $ml={16} $w={48} $h={48} $bg="#eef5f9">
          <Chrome />
          <PinMark $bottom={0} $w={20} $c="#0067c0" />
        </PinBox>
        <PinBox $ml={16}>
          <MusicApp />
          <PinMark $bottom={-10} $w={8} $c="#70757a" />
        </PinBox>
        <PinBox $ml={28}>
          <WeChat />
          <PinMark $bottom={-10} $w={8} $c="#70757a" />
        </PinBox>
        <Slot $w={12} $ml={132}><Chev dir="up" s={14} c="#1a1a1a" sw={1.2} /></Slot>
        <Slot $w={20} $ml={24}><CloudIco /></Slot>
        <Txt $ml={21} $fs={17}>中</Txt>
        <Slot $w={20} $ml={22}><Wifi /></Slot>
        <Slot $w={20} $ml={10}><Speaker /></Slot>
        <Slot $w={21} $ml={9}><Battery /></Slot>
        <ClockCol $w={75} $ml={15} $align="flex-end" $c="#1a1a1a">
          <span>15:06</span>
          <span>2025/4/10</span>
        </ClockCol>
        <Slot $w={17} $ml={12}><AppBell /></Slot>
      </LightTaskbar>

      <Notch />

      <RedBox />
      <ArrowSvg width="120" height="250" viewBox="0 0 120 250">
        <polygon points="18,7 35,23 31,24 105,237 103,238 21,28 16,30" fill="#ff0000" />
      </ArrowSvg>

      <Dock>
        <DockItem $bg="#0d8f2f"><DockSign /></DockItem>
        <DockItem $bg="linear-gradient(#0a8dff, #00b7ff)" $open><DockMonitor /></DockItem>
        <DockItem $bg="#ffaf00" $open><DockServer /></DockItem>
        <DockItem $bg="#9a2ed8" $open><DockBook /></DockItem>
        <DockItem $bg="#0a84ff"><AiMark>AI</AiMark></DockItem>
        <DockItem $bg="#00e52c"><DockChat /></DockItem>
        <DockItem $bg="#ff6000"><DockGear /></DockItem>
        <DockItem $bg="#d41f00"><DockPower /></DockItem>
      </Dock>

      <FloatPanel>
        <FloatHead>
          <I s={15} sw={1.2}><path d="m2 2 6 6-6 6M8 2l6 6-6 6" /></I>
        </FloatHead>
        {FLOAT.map(icon => <FloatRow key={icon.key}>{icon}</FloatRow>)}
      </FloatPanel>
    </Page>
  );
}

export default App;
